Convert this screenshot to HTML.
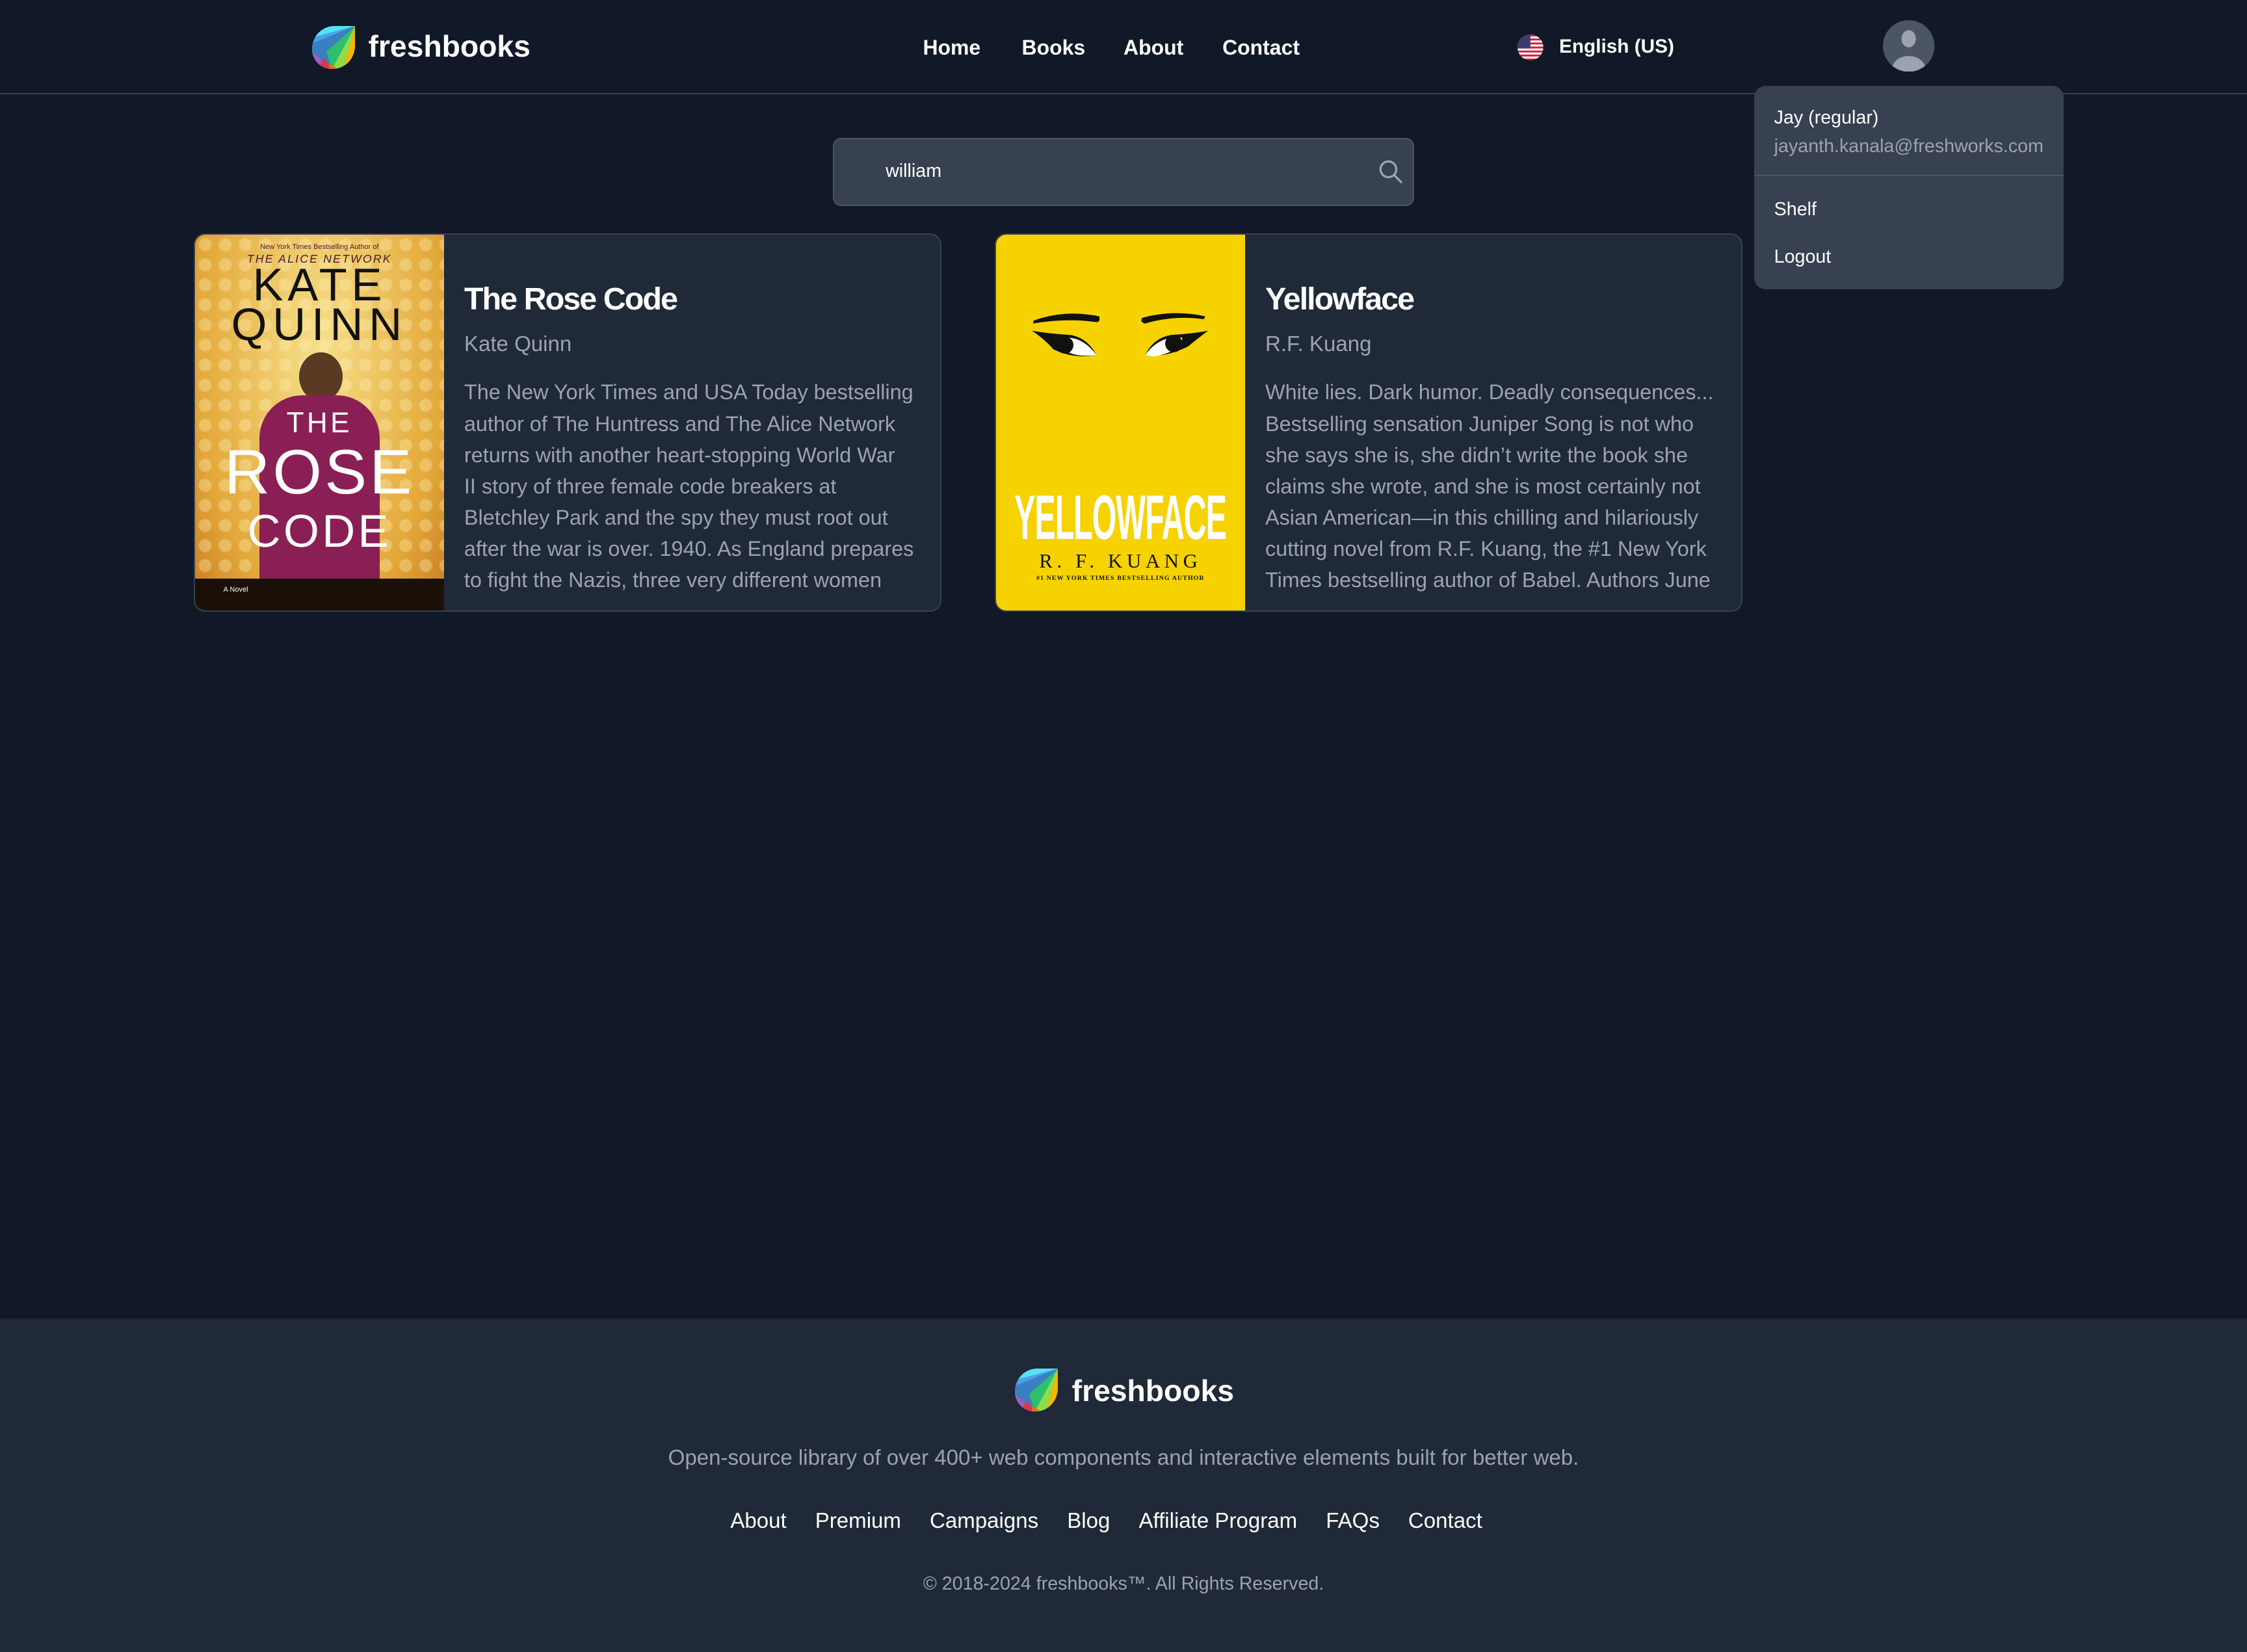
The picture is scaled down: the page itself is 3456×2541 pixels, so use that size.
<!DOCTYPE html>
<html><head><meta charset="utf-8"><style>
*{margin:0;padding:0;box-sizing:border-box}
html,body{width:1568px;height:1153px;overflow:hidden}
body{zoom:2.2041;background:#111827;font-family:"Liberation Sans",sans-serif;color:#fff;position:relative}
.a{position:absolute;white-space:nowrap}
.nav{font-size:14.5px;font-weight:bold;top:25px}
.card{position:absolute;top:163px;width:522px;height:264px;background:#1f2937;border:1px solid #374151;border-radius:8px;overflow:hidden}
.card h3{position:absolute;left:188px;top:32px;font-size:22px;letter-spacing:-0.9px;font-weight:bold}
.card .au{position:absolute;left:188px;top:68px;font-size:15px;color:#9ca3af}
.card .d{position:absolute;left:188px;top:99px;font-size:14.7px;line-height:21.8px;color:#9ca3af;white-space:nowrap}
.cov{position:absolute;left:0;top:0;width:174px;height:264px;overflow:hidden}
</style></head><body>
<svg width="0" height="0" style="position:absolute"><defs>
<clipPath id="lf"><path d="M30 0 L30 13 C30 23 23 30 14 30 C6 30 0 24 0 16 C0 7 7 0 16 0 Z"/></clipPath>
<g id="logo"><g clip-path="url(#lf)">
<rect width="30" height="30" fill="#4aa3e8"/>
<polygon points="30,0 0,0 0,8" fill="#58e0f5"/>
<polygon points="30,0 0,12 0,20 14,30" fill="#3a7fc0"/>
<polygon points="30,0 10,18 14,30" fill="#2dc06a"/>
<polygon points="30,0 14,30 22,30" fill="#8fdc4a"/>
<polygon points="30,0 22,30 30,30" fill="#fbb400"/>
<polygon points="0,18 14,30 0,30" fill="#a35bc8"/>
<polygon points="8,22 14,30 4,30" fill="#d63a4a"/>
<polygon points="12,26 18,30 12,30" fill="#ef6a20"/>
</g></g></defs></svg>

<svg class="a" style="left:218px;top:18px" width="30" height="30" viewBox="0 0 30 30"><use href="#logo"/></svg>
<div class="a" style="left:257px;top:20px;font-size:21px;font-weight:bold">freshbooks</div>
<div class="a nav" style="left:644px">Home</div>
<div class="a nav" style="left:713px">Books</div>
<div class="a nav" style="left:784px">About</div>
<div class="a nav" style="left:853px">Contact</div>
<svg class="a" style="left:1059px;top:24px" width="18" height="18" viewBox="0 0 18 18"><defs><clipPath id="fc"><circle cx="9" cy="9" r="9"/></clipPath></defs><g clip-path="url(#fc)"><rect width="18" height="18" fill="#fff"/><rect y="0" width="18" height="1.4" fill="#c8283c"/><rect y="2.8" width="18" height="1.4" fill="#c8283c"/><rect y="5.6" width="18" height="1.4" fill="#c8283c"/><rect y="8.4" width="18" height="1.4" fill="#c8283c"/><rect y="11.2" width="18" height="1.4" fill="#c8283c"/><rect y="14" width="18" height="1.4" fill="#c8283c"/><rect y="16.8" width="18" height="1.4" fill="#c8283c"/><rect width="9" height="9.8" fill="#3c3b6e"/></g></svg>
<div class="a" style="left:1088px;top:25px;font-size:13.5px;font-weight:bold">English (US)</div>
<svg class="a" style="left:1314px;top:14px" width="36" height="36" viewBox="0 0 36 36"><defs><clipPath id="av"><circle cx="18" cy="18" r="18"/></clipPath></defs><circle cx="18" cy="18" r="18" fill="#4b5563"/><g clip-path="url(#av)" fill="#9ca3af"><ellipse cx="18" cy="13" rx="5" ry="6"/><ellipse cx="18" cy="35" rx="12" ry="10"/></g></svg>
<div class="a" style="left:0;top:65px;width:1568px;height:1px;background:#374151"></div>

<div class="a" style="left:581px;top:96px;width:406px;height:48px;background:#374151;border:1px solid #4b5563;border-radius:6px"></div>
<div class="a" style="left:618px;top:112px;font-size:13px">william</div>
<svg class="a" style="left:962px;top:111px" width="17" height="17" viewBox="0 0 17 17" fill="none" stroke="#9ca3af" stroke-width="1.5"><circle cx="7" cy="7" r="5.5"/><path d="M11 11 L16 16" stroke-linecap="round"/></svg>

<div class="card" style="left:135px">
<div class="cov" style="background:radial-gradient(ellipse at 50% 30%,#f6e08a,#e3a83a 70%,#c77a20)">
<div style="position:absolute;left:0;top:0;width:174px;height:264px;background-image:radial-gradient(circle,rgba(255,240,180,.35) 4px,transparent 5px);background-size:14px 14px"></div>
<div class="a" style="left:0;width:174px;text-align:center;top:6px;font-size:5px;color:#4a1a30">New York Times Bestselling Author of</div>
<div class="a" style="left:0;width:174px;text-align:center;top:12px;font-size:8px;letter-spacing:1px;color:#4a1a30;font-style:italic">THE ALICE NETWORK</div>
<div class="a" style="left:0;width:174px;text-align:center;top:16px;font-size:32px;letter-spacing:3px;color:#111">KATE</div>
<div class="a" style="left:0;width:174px;text-align:center;top:44px;font-size:32px;letter-spacing:4px;color:#111">QUINN</div>
<div class="a" style="left:73px;top:82px;width:30px;height:34px;border-radius:50%;background:#5a3a22"></div>
<div class="a" style="left:45px;top:112px;width:84px;height:160px;border-radius:30px 30px 0 0;background:#8a1f55"></div>
<div class="a" style="left:0;top:240px;width:174px;height:24px;background:#1a1008"></div>
<div class="a" style="left:0;width:174px;text-align:center;top:120px;font-size:20px;letter-spacing:2px;color:#fff">THE</div>
<div class="a" style="left:0;width:174px;text-align:center;top:140px;font-size:44px;letter-spacing:2px;color:#fff">ROSE</div>
<div class="a" style="left:0;width:174px;text-align:center;top:188px;font-size:32px;letter-spacing:2px;color:#fff">CODE</div>
<div class="a" style="left:20px;top:245px;font-size:5px;color:#fff">A Novel</div>
</div>
<h3>The Rose Code</h3><div class="au">Kate Quinn</div>
<div class="d">The New York Times and USA Today bestselling<br>author of The Huntress and The Alice Network<br>returns with another heart-stopping World War<br>II story of three female code breakers at<br>Bletchley Park and the spy they must root out<br>after the war is over. 1940. As England prepares<br>to fight the Nazis, three very different women</div>
</div>

<div class="card" style="left:694px">
<div class="cov" style="background:#f6d200">
<svg class="a" style="left:0;top:0" width="174" height="264" viewBox="0 0 174 264">
<path d="M26 60 Q48 52 72 57 Q73 61 70 61 Q48 58 26 62 Z" fill="#111"/>
<path d="M102 58 Q124 52 146 57 L145 59 Q124 56 104 62 Q100 61 102 58 Z" fill="#111"/>
<path d="M25 67 Q34 73 40 80 Q55 87 70 84 Q64 72 52 70 Q36 69 25 67 Z" fill="#111"/>
<path d="M45 72 Q60 70 70 84 Q55 86 47 80 Z" fill="#fff"/><circle cx="48" cy="77" r="6" fill="#111"/>
<path d="M148 67 Q140 73 134 78 Q118 86 104 84 Q110 72 122 70 Q138 69 148 67 Z" fill="#111"/>
<path d="M104 84 Q114 70 130 72 Q128 82 110 85 Z" fill="#fff"/><circle cx="124" cy="76" r="6" fill="#111"/>
</svg>
<div class="a" style="left:87px;top:172px;font-size:44px;font-weight:bold;color:#fff;transform:translateX(-50%) scaleX(.5);letter-spacing:-1px">YELLOWFACE</div>
<div class="a" style="left:0;width:174px;text-align:center;top:220px;font-size:14px;letter-spacing:3px;color:#111;font-family:'Liberation Serif',serif">R. F. KUANG</div>
<div class="a" style="left:0;width:174px;text-align:center;top:237px;font-size:4.5px;letter-spacing:.5px;color:#111;font-weight:bold;font-family:'Liberation Serif',serif">#1 NEW YORK TIMES BESTSELLING AUTHOR</div>
</div>
<h3>Yellowface</h3><div class="au">R.F. Kuang</div>
<div class="d">White lies. Dark humor. Deadly consequences...<br>Bestselling sensation Juniper Song is not who<br>she says she is, she didn’t write the book she<br>claims she wrote, and she is most certainly not<br>Asian American—in this chilling and hilariously<br>cutting novel from R.F. Kuang, the #1 New York<br>Times bestselling author of Babel. Authors June</div>
</div>

<div class="a" style="left:1224px;top:60px;width:216px;height:142px;background:#374151;border-radius:8px">
<div class="a" style="left:14px;top:15px;font-size:13px">Jay (regular)</div>
<div class="a" style="left:14px;top:35px;font-size:13px;color:#9ca3af">jayanth.kanala@freshworks.com</div>
<div class="a" style="left:0;top:62px;width:216px;height:1px;background:#4b5563"></div>
<div class="a" style="left:14px;top:79px;font-size:13px">Shelf</div>
<div class="a" style="left:14px;top:112px;font-size:13px">Logout</div>
</div>

<div class="a" style="left:0;top:920px;width:1568px;height:233px;background:#1f2937">
<svg class="a" style="left:708px;top:35px" width="30" height="30" viewBox="0 0 30 30"><use href="#logo"/></svg>
<div class="a" style="left:748px;top:38px;font-size:21px;font-weight:bold">freshbooks</div>
<div class="a" style="left:0;width:1568px;text-align:center;top:89px;font-size:15px;color:#9ca3af">Open-source library of over 400+ web components and interactive elements built for better web.</div>
<div class="a" style="left:-12px;width:1568px;text-align:center;top:133px;font-size:15px">
<span style="margin:0 10px">About</span><span style="margin:0 10px">Premium</span><span style="margin:0 10px">Campaigns</span><span style="margin:0 10px">Blog</span><span style="margin:0 10px">Affiliate Program</span><span style="margin:0 10px">FAQs</span><span style="margin:0 10px">Contact</span></div>
<div class="a" style="left:0;width:1568px;text-align:center;top:178px;font-size:13px;color:#9ca3af">© 2018-2024 freshbooks™. All Rights Reserved.</div>
</div>
</body></html>
